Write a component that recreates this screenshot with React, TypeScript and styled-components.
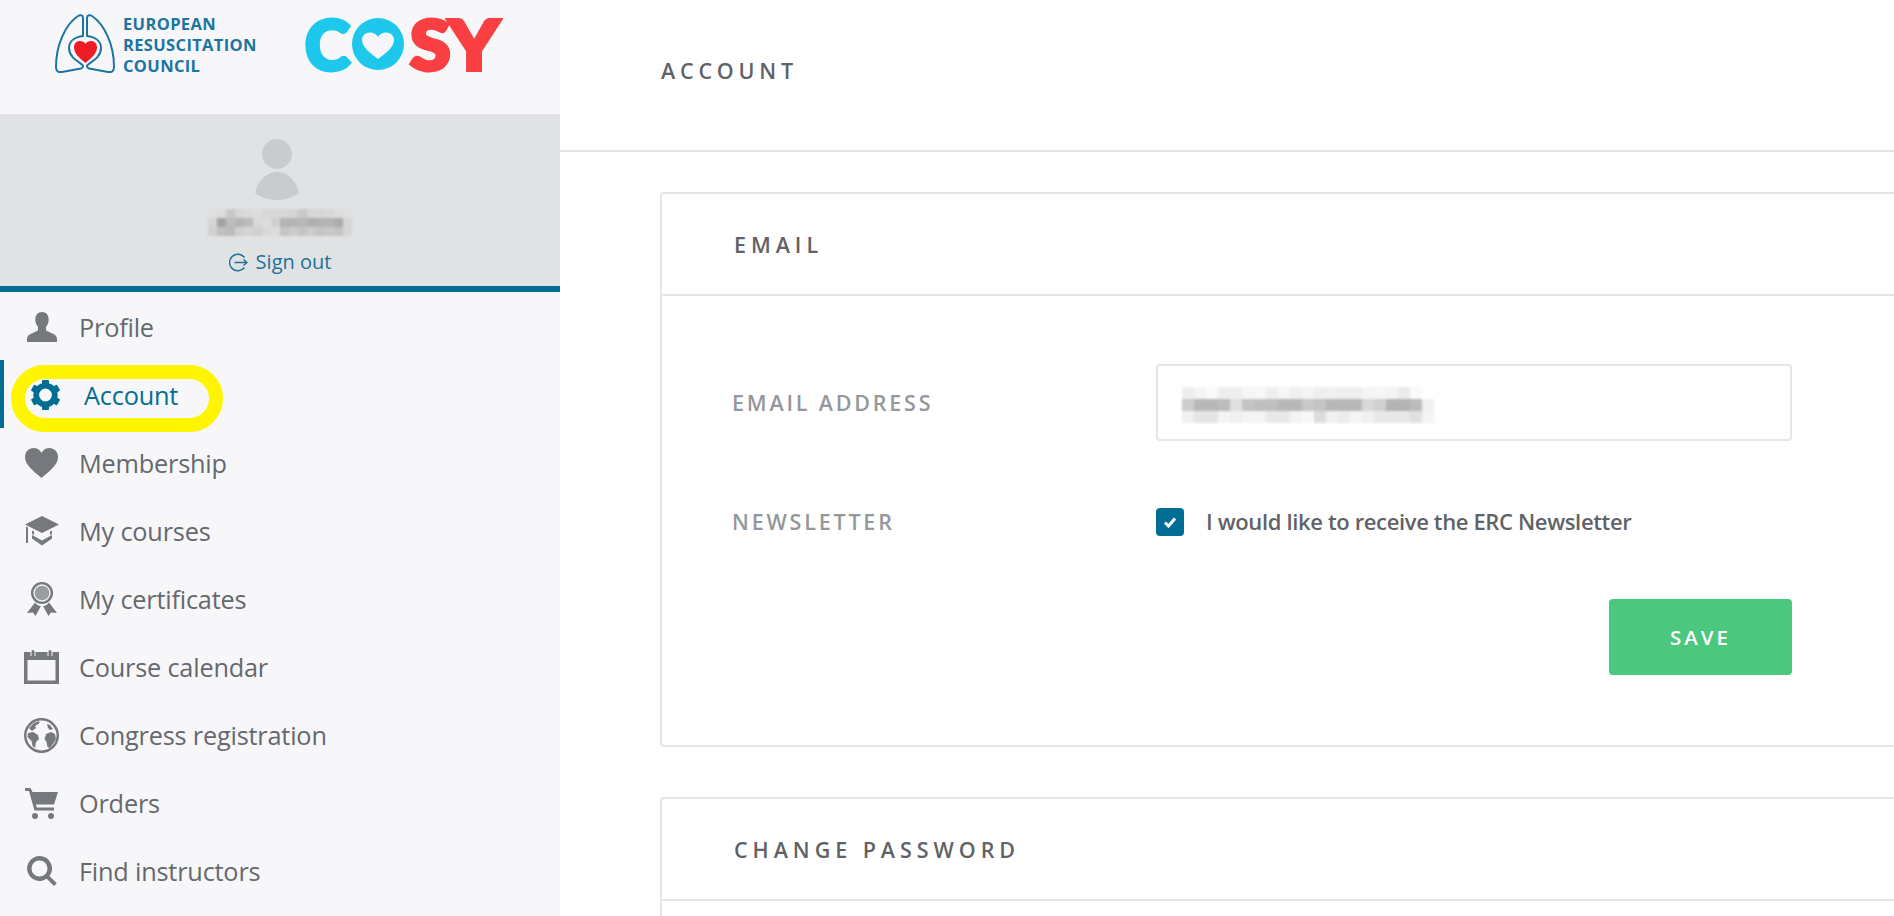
import React from 'react';
import styled, { createGlobalStyle } from 'styled-components';

const GlobalStyle = createGlobalStyle`
    html, body {
        margin: 0;
        padding: 0;
        height: 100%;
        background: #fff;
        font-family: "Open Sans", "Liberation Sans", sans-serif;
        overflow: hidden;
    }
`;

const Page = styled.div`
    display: flex;
    width: 1894px;
    height: 916px;
    overflow: hidden;
`;

const Sidebar = styled.aside`
    flex: 0 0 560px;
    background: #f7f7fa;
`;

const LogoBar = styled.div`
    height: 114px;
    box-sizing: border-box;
    padding: 14px 0 0 55px;
    display: flex;
    align-items: flex-start;
`;

const ErcName = styled.div`
    margin: -1px 0 0 8px;
    width: 182px;
    font-size: 16.5px;
    line-height: 21px;
    font-weight: 700;
    letter-spacing: 0.35px;
    color: #1b75a0;
    white-space: nowrap;
`;

const Cosy = styled.div`
    display: flex;
    align-items: center;
    height: 52px;
    margin-top: 4px;
    font-family: "Lato", sans-serif;
    font-weight: 900;
    font-size: 68px;
    line-height: 52px;
`;

const CosyLetter = styled.span<{ $color: string; $pull?: number; $stretch?: number }>`
    display: inline-block;
    color: ${({ $color }) => $color};
    -webkit-text-stroke: 4px ${({ $color }) => $color};
    margin-left: ${({ $pull }) => $pull ?? 0}px;
    transform: scaleX(${({ $stretch }) => $stretch ?? 1});
    transform-origin: left center;
`;

const ProfilePanel = styled.div`
    height: 172px;
    box-sizing: border-box;
    padding-top: 25px;
    background: #e0e2e4;
    display: flex;
    flex-direction: column;
    align-items: center;
`;

const AvatarIcon = styled.svg`
    display: block;
    width: 44px;
    height: 61px;
    margin-right: 7px;
    fill: #c9cbcd;
`;

const Mosaic = styled.svg`
    display: block;
    flex: none;
    filter: blur(0.8px);
`;

const NameMosaic = styled(Mosaic)`
    margin-top: 9px;
`;

const SignOut = styled.a`
    display: flex;
    align-items: center;
    gap: 8px;
    margin-top: 12px;
    font-size: 20px;
    line-height: 28px;
    color: #1b7398;

    svg {
        width: 19px;
        height: 19px;
        fill: none;
        stroke: currentColor;
        stroke-width: 1.4;
    }
`;

const BlueRule = styled.div`
    height: 6px;
    background: #006d94;
`;

const NavList = styled.nav`
    display: flex;
    flex-direction: column;
`;

const NavRow = styled.a<{ $active?: boolean }>`
    position: relative;
    display: flex;
    align-items: center;
    height: 68px;
    box-sizing: border-box;
    padding: 2px 0 0 24px;
    gap: ${({ $active }) => ($active ? '21px' : '20px')};
    font-size: 25.3px;
    letter-spacing: -0.2px;
    color: ${({ $active }) => ($active ? '#006d94' : '#65696d')};
    border-left: ${({ $active }) => ($active ? '4px solid #006d94' : '0')};
    border-radius: ${({ $active }) => ($active ? '0 4px 4px 0' : '0')};
`;

const NavIcon = styled.span<{ $active?: boolean }>`
    flex: 0 0 35px;
    display: flex;
    justify-content: center;

    svg {
        display: block;
        fill: ${({ $active }) => ($active ? '#006d94' : '#75797d')};
    }
`;

const Highlight = styled.span`
    position: absolute;
    left: 7px;
    top: 5px;
    width: 212px;
    height: 67px;
    box-sizing: border-box;
    border: 14px solid #fff500;
    border-radius: 34px;
    pointer-events: none;
`;

const Main = styled.main`
    flex: 1;
    min-width: 0;
    overflow: hidden;
`;

const PageHeader = styled.header`
    height: 152px;
    box-sizing: border-box;
    border-bottom: 2px solid #e3e4e5;
    padding: 55px 0 0 101px;
`;

const PageTitle = styled.h1`
    margin: 0;
    font-size: 21.5px;
    line-height: 32px;
    font-weight: 600;
    letter-spacing: 4.8px;
    color: #5f6367;
`;

const Cards = styled.div`
    padding: 40px 0 0 100px;
    display: flex;
    flex-direction: column;
    gap: 50px;
`;

const Card = styled.section<{ $open?: boolean }>`
    width: 1400px;
    min-height: ${({ $open }) => ($open ? '400px' : '0')};
    box-sizing: border-box;
    border: 2px solid #e5e6e7;
    border-radius: 4px;
`;

const CardHeader = styled.div`
    height: 102px;
    box-sizing: border-box;
    border-bottom: 2px solid #e5e6e7;
    padding: 35px 0 0 72px;
`;

const CardTitle = styled.h2`
    margin: 0;
    font-size: 21.5px;
    line-height: 32px;
    font-weight: 600;
    letter-spacing: 4.95px;
    color: #5f6367;
`;

const Form = styled.div`
    display: grid;
    grid-template-columns: 424px 636px;
    grid-template-rows: 77px 28px 76px;
    row-gap: 67px;
    padding: 68px 0 66px 70px;
`;

const FieldLabel = styled.label<{ $lift?: number }>`
    align-self: center;
    margin-bottom: ${({ $lift }) => $lift ?? 0}px;
    font-size: 21.5px;
    font-weight: 600;
    letter-spacing: 2.8px;
    color: #94979b;
`;

const Input = styled.div`
    box-sizing: border-box;
    border: 2px solid #e5e6e7;
    border-radius: 4px;
    padding: 21px 0 0 24px;
`;

const CheckRow = styled.div`
    display: flex;
    align-items: center;
    gap: 22px;
    font-size: 22px;
    font-weight: 600;
    letter-spacing: -0.36px;
    color: #5f6367;
    white-space: nowrap;
`;

const CheckText = styled.span`
    margin-bottom: 2px;
`;

const CheckBox = styled.span`
    flex: 0 0 28px;
    height: 28px;
    border-radius: 4px;
    background: #006d94;
    display: flex;
    align-items: center;
    justify-content: center;

    svg {
        width: 14px;
        height: 14px;
        fill: none;
        stroke: #fff;
        stroke-width: 3;
    }
`;

const SaveRow = styled.div`
    grid-column: 2;
    display: flex;
    justify-content: flex-end;
    margin-top: -4px;
`;

const SaveButton = styled.button`
    width: 183px;
    height: 76px;
    padding: 0 0 1px;
    border: 0;
    border-radius: 4px;
    background: #4bc87d;
    color: #fff;
    font-family: inherit;
    font-size: 20.5px;
    font-weight: 600;
    letter-spacing: 3px;
`;

const nameCells = [
    ['e0', 'dc', 'c8', 'd6', 'da', 'dc', 'd6', 'd6', 'd6', 'd4', 'c8', 'd6', 'd6', 'd8', 'dc', 'e0'],
    ['d6', 'a4', 'bc', 'b4', 'bc', 'd8', 'dc', 'd0', 'b4', 'b4', 'b8', 'b0', 'b4', 'b4', 'ac', 'd6'],
    ['d0', 'c0', 'bc', 'd0', 'd4', 'd0', 'd8', 'dc', 'c4', 'cc', 'c4', 'cc', 'c4', 'c8', 'c4', 'd6'],
];

const emailCells = [
    ['ee', 'f4', 'fa', 'ee', 'ee', 'f6', 'f8', 'ee', 'f6', 'f0', 'f4', 'ee', 'f0', 'ee', 'ee', 'f4', 'f6', 'f4', 'ea', 'fa', 'ff'],
    ['cc', 'b8', 'b8', 'bc', 'e0', 'c4', 'c0', 'c0', 'b8', 'b8', 'c8', 'c4', 'b8', 'b8', 'b8', 'd8', 'd0', 'b4', 'b4', 'bc', 'f0'],
    ['f0', 'e4', 'e4', 'f4', 'f0', 'f4', 'f4', 'e8', 'e8', 'f4', 'f8', 'dc', 'f0', 'ec', 'f4', 'f0', 'e8', 'e8', 'e8', 'e0', 'f4'],
];

const Pixels: React.FC<{ cells: string[][]; size: number; as?: typeof Mosaic }> = ({ cells, size, as: Root = Mosaic }) => (
    <Root width={cells[0].length * size} height={cells.length * size}>
        {cells.map((row, y) =>
            row.map((c, x) => (
                <rect key={`${x}-${y}`} x={x * size} y={y * size} width={size} height={size} fill={`#${c}${c}${c}`} />
            )),
        )}
    </Root>
);

const LungsLogo = () => (
    <svg width="60" height="59" viewBox="0 0 60 59" style={{ flex: 'none' }}>
        <g fill="none" stroke="#1b75a0" strokeWidth="2" strokeLinejoin="round">
            <path d="M28 22V4C28 1 25 .5 23 2 11 10 1 30 1 53c0 4 2 5.500 6 5l19-3.500c1.500-.5 2-1.500 2-3-2-3-14-7-14-17.500C14 27 20 23 28 22z" />
            <path d="M32 22V4c0-3 3-3.500 5-2 12 8 22 28 22 51 0 4-2 5.500-6 5l-19-3.500c-1.500-.5-2-1.500-2-3 2-3 14-7 14-17.500C46 27 40 23 32 22z" />
        </g>
        <path fill="#ee1c25" d="M30.500 49C24 44 19 39 19 33.500 19 29 22 27 25 27c2.500 0 4.500 1 5.500 3 1-2 3-3 5.500-3 3 0 6 2 6 6.500C42 39 37 44 30.500 49z" />
    </svg>
);

const CosyO = () => (
    <svg width="54" height="52" viewBox="0 0 54 52" style={{ flex: 'none', marginLeft: 1 }}>
        <circle cx="27" cy="26" r="26" fill="#1dc8ec" />
        <path fill="#f7f7fa" d="M27 41C19 35 11 29 11 22c0-4.500 3.500-7.500 8-7.500 3.200 0 6.500 1.500 8 4.500 1.500-3 4.800-4.500 8-4.500 4.500 0 8 3 8 7.500 0 7-8 13-16 19z" />
    </svg>
);

const ProfileIcon = () => (
    <svg width="30" height="30" viewBox="0 0 30 30">
        <path d="M15 0c-4.200 0-6.700 3-6.700 7.500 0 3 1 5.500 2.700 7.300v2.400c0 1-.5 1.600-1.500 2.100L3.500 22C1 23 0 25 0 27.500V30h30v-2.500c0-2.500-1-4.500-3.500-5.500l-6-2.700c-1-.5-1.500-1.100-1.500-2.100v-2.400c1.700-1.800 2.700-4.300 2.700-7.300C21.700 3 19.200 0 15 0z" />
    </svg>
);

const GearIcon = () => (
    <svg width="31" height="30" viewBox="0 0 31 30" style={{ marginLeft: -1 }}>
        <circle cx="15.500" cy="15" r="9.300" fill="none" stroke="#006d94" strokeWidth="5.800" />
        {[0, 60, 120, 180, 240, 300].map((a) => (
            <rect key={a} x="12" y="0" width="7" height="6" rx="1" transform={`rotate(${a} 15.500 15)`} />
        ))}
    </svg>
);

const HeartIcon = () => (
    <svg width="33" height="30" viewBox="0 0 33 30">
        <path d="M16.500 30C7 22 0 16.500 0 9 0 3.500 4 0 8.500 0c3.400 0 6.500 1.800 8 5 1.500-3.200 4.600-5 8-5C29 0 33 3.500 33 9c0 7.500-7 13-16.500 21z" />
    </svg>
);

const CapIcon = () => (
    <svg width="34" height="30" viewBox="0 0 34 30">
        <path d="M17 0l17 8.500L17 17 0 8.500z" />
        <path d="M1 10.500l2 1V27H1z" />
        <path d="M7 19l10 5.500L27 19v3.500L17 29.500 7 22.500z" />
        <path d="M7 14.500l2 1V19L7 18zM27 14.500l-2 1V19l2-1z" />
    </svg>
);

const CertificateIcon = () => (
    <svg width="30" height="34" viewBox="0 0 30 34">
        <circle cx="15" cy="11" r="11" />
        <circle cx="15" cy="11" r="8" fill="#9a9da0" stroke="#f7f7fa" strokeWidth="1.300" />
        <path d="M8 20.500L0 31l6-.5 2.500 3.500L14 24c-2.500 0-4.500-1.500-6-3.500z" />
        <path d="M22 20.500L30 31l-6-.5-2.500 3.500L16 24c2.500 0 4.500-1.500 6-3.500z" />
    </svg>
);

const CalendarIcon = () => (
    <svg width="35" height="34" viewBox="0 0 35 34">
        <path fillRule="evenodd" d="M0 2h6.500v4h5V2h12v4h5V2H35v32H0zM3.500 10v20.500h28V10z" />
        <rect x="7.500" y="0" width="3" height="7" rx="1.500" />
        <rect x="24.500" y="0" width="3" height="7" rx="1.500" />
    </svg>
);

const GlobeIcon = () => (
    <svg width="35" height="35" viewBox="0 0 35 35">
        <path fillRule="evenodd" d="M17.500 0a17.500 17.500 0 1 0 0 35 17.500 17.500 0 0 0 0-35zm0 2.500a15 15 0 1 1 0 30 15 15 0 0 1 0-30z" />
        <path d="M5 10l5-5 5-2 .5 2-4.500 3 1 2-4 3zM4 15l5-1 5 3 1 4-3 3-1 6-2.500-2-1-5-4-4zM22 16l5-2 4 2 1 5-3 5-3 4-2.500-1-1-5-2-3 1-3zM23 6l3 1 3 4-3 1-2-2z" />
    </svg>
);

const CartIcon = () => (
    <svg width="33" height="31" viewBox="0 0 33 31">
        <path d="M0 0h5.500l2 4H33l-4 12.500H11l.8 3H29v3H9.500L4 3H0z" />
        <circle cx="10" cy="28" r="3" />
        <circle cx="26" cy="28" r="3" />
    </svg>
);

const SearchIcon = () => (
    <svg width="30" height="30" viewBox="0 0 30 30">
        <path fillRule="evenodd" d="M12.500 0a12.500 12.500 0 0 1 10 20l7.300 7.300-2.800 2.700-7.300-7.200A12.500 12.500 0 1 1 12.500 0zm0 4.500a8 8 0 1 0 0 16 8 8 0 0 0 0-16z" />
    </svg>
);

const navItems = [
    { label: 'Profile', icon: <ProfileIcon /> },
    { label: 'Account', icon: <GearIcon />, active: true },
    { label: 'Membership', icon: <HeartIcon /> },
    { label: 'My courses', icon: <CapIcon /> },
    { label: 'My certificates', icon: <CertificateIcon /> },
    { label: 'Course calendar', icon: <CalendarIcon /> },
    { label: 'Congress registration', icon: <GlobeIcon /> },
    { label: 'Orders', icon: <CartIcon /> },
    { label: 'Find instructors', icon: <SearchIcon /> },
];

const App: React.FC = () => {
    return (
        <Page>
            <GlobalStyle />
            <Sidebar>
                <LogoBar>
                    <LungsLogo />
                    <ErcName>
                        EUROPEAN
                        <br />
                        RESUSCITATION
                        <br />
                        COUNCIL
                    </ErcName>
                    <Cosy>
                        <CosyLetter $color="#1dc8ec">C</CosyLetter>
                        <CosyO />
                        <CosyLetter $color="#f93f42" $pull={5} $stretch={1.08}>S</CosyLetter>
                        <CosyLetter $color="#f93f42" $pull={2} $stretch={1.12}>Y</CosyLetter>
                    </Cosy>
                </LogoBar>
                <ProfilePanel>
                    <AvatarIcon viewBox="0 0 44 61">
                        <circle cx="22" cy="15" r="15" />
                        <path d="M0 54C3 41 12 33 22 33s19 8 22 21c-7 4.500-14 7-22 7S7 58.500 0 54z" />
                    </AvatarIcon>
                    <Pixels cells={nameCells} size={9} as={NameMosaic} />
                    <SignOut>
                        <svg viewBox="0 0 19 19">
                            <path d="M15.500 4.500a8.300 8.300 0 1 0 0 10" />
                            <path d="M5.500 9.500h12.500M14.500 6.500l3.500 3-3.500 3" />
                        </svg>
                        Sign out
                    </SignOut>
                </ProfilePanel>
                <BlueRule />
                <NavList>
                    {navItems.map((item) => (
                        <NavRow key={item.label} $active={item.active}>
                            <NavIcon $active={item.active}>{item.icon}</NavIcon>
                            {item.label}
                            {item.active && <Highlight />}
                        </NavRow>
                    ))}
                </NavList>
            </Sidebar>
            <Main>
                <PageHeader>
                    <PageTitle>ACCOUNT</PageTitle>
                </PageHeader>
                <Cards>
                    <Card>
                        <CardHeader>
                            <CardTitle>EMAIL</CardTitle>
                        </CardHeader>
                        <Form>
                            <FieldLabel>EMAIL ADDRESS</FieldLabel>
                            <Input>
                                <Pixels cells={emailCells} size={12} />
                            </Input>
                            <FieldLabel $lift={2}>NEWSLETTER</FieldLabel>
                            <CheckRow>
                                <CheckBox>
                                    <svg viewBox="0 0 14 14">
                                        <path d="M2 7.500l3.500 3.500L12 3.500" />
                                    </svg>
                                </CheckBox>
                                <CheckText>I would like to receive the ERC Newsletter</CheckText>
                            </CheckRow>
                            <SaveRow>
                                <SaveButton>SAVE</SaveButton>
                            </SaveRow>
                        </Form>
                    </Card>
                    <Card $open>
                        <CardHeader>
                            <CardTitle>CHANGE PASSWORD</CardTitle>
                        </CardHeader>
                    </Card>
                </Cards>
            </Main>
        </Page>
    );
};

export default App;
